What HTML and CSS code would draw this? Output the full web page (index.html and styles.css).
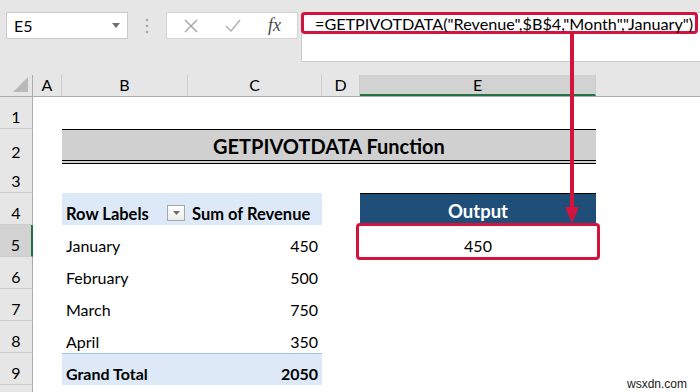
FILE: index.html
```html
<!DOCTYPE html>
<html>
<head>
<meta charset="UTF-8">
<title>GETPIVOTDATA Function</title>
<link rel="stylesheet" href="styles.css">
</head>
<body>
<div class="app">
    <div class="toolbar">
        <div class="namebox">
            <span>E5</span>
            <svg width="8" height="5" viewBox="0 0 8 5"><path d="M0 0h8L4 5z" fill="#6f6f6f"/></svg>
        </div>
        <div class="grip">
            <svg width="4" height="16" viewBox="0 0 4 16"><circle cx="2" cy="2" r="1.3" fill="#a9a9a9"/><circle cx="2" cy="8" r="1.3" fill="#a9a9a9"/><circle cx="2" cy="14" r="1.3" fill="#a9a9a9"/></svg>
        </div>
        <div class="fnbox">
            <svg width="14" height="14" viewBox="0 0 14 14"><path d="M1 1L13 13M13 1L1 13" stroke="#a3a3a3" stroke-width="1.4" fill="none"/></svg>
            <svg width="16" height="13" viewBox="0 0 16 13"><path d="M1 7L6 12L15 1" stroke="#b3b3b3" stroke-width="1.5" fill="none"/></svg>
            <span class="fx">fx</span>
        </div>
        <div class="formula">
            <div class="formula-line">=GETPIVOTDATA("Revenue",$B$4,"Month","January")</div>
        </div>
    </div>

    <div class="colhead">
        <div class="corner"><span class="tri"></span></div>
        <div>A</div>
        <div>B</div>
        <div>C</div>
        <div>D</div>
        <div class="sel">E</div>
        <div class="blank"></div>
    </div>

    <div class="row">
        <div class="rh">1</div>
    </div>
    <div class="row">
        <div class="rh">2</div>
        <div></div>
        <div class="title">GETPIVOTDATA Function</div>
    </div>
    <div class="row">
        <div class="rh">3</div>
    </div>
    <div class="row">
        <div class="rh">4</div>
        <div></div>
        <div class="pv-head">Row Labels<span class="filter"><svg width="7" height="4" viewBox="0 0 7 4"><path d="M0 0h7L3.5 4z" fill="#6d6d6d"/></svg></span></div>
        <div class="pv-head">Sum of Revenue</div>
        <div></div>
        <div class="out-head">Output</div>
    </div>
    <div class="row">
        <div class="rh active">5</div>
        <div></div>
        <div class="cell">January</div>
        <div class="cell num">450</div>
        <div></div>
        <div class="cell mid">450</div>
    </div>
    <div class="row">
        <div class="rh">6</div>
        <div></div>
        <div class="cell">February</div>
        <div class="cell num">500</div>
    </div>
    <div class="row">
        <div class="rh">7</div>
        <div></div>
        <div class="cell">March</div>
        <div class="cell num">750</div>
    </div>
    <div class="row">
        <div class="rh">8</div>
        <div></div>
        <div class="cell">April</div>
        <div class="cell num">350</div>
    </div>
    <div class="row">
        <div class="rh">9</div>
        <div></div>
        <div class="cell total">Grand Total</div>
        <div class="cell num total">2050</div>
    </div>
    <div class="row">
        <div class="rh"></div>
    </div>

    <!-- callouts -->
    <div class="mark-e5"></div>
    <svg class="arrow" width="20" height="195" viewBox="0 0 20 195">
        <path d="M10 0V178" stroke="#d4123e" stroke-width="4"/>
        <path d="M3 174H17L10 190Z" fill="#d4123e"/>
    </svg>
    <div class="watermark">wsxdn.com</div>
</div>
</body>
</html>
```

FILE: styles.css
```css
* {
    box-sizing: border-box;
}

body {
    margin: 0;
    background: #fff;
    font-family: Lato, "Open Sans", sans-serif;
    color: #000;
}

.app {
    position: relative;
    width: 700px;
    height: 392px;
    overflow: hidden;
}

/* formula bar */
.toolbar {
    height: 75px;
    background: #e6e6e6;
    display: flex;
    align-items: flex-start;
    padding: 12px 0 0 6px;
}

.namebox {
    width: 122px;
    height: 27px;
    background: #fff;
    border: 1px solid #cbcbcb;
    display: flex;
    align-items: center;
    justify-content: space-between;
    padding: 0 7px 0 7px;
    font-size: 16px;
}

.grip {
    width: 38px;
    height: 27px;
    display: flex;
    align-items: center;
    justify-content: center;
}

.fnbox {
    width: 132px;
    height: 27px;
    background: #fff;
    border: 1px solid #d3d3d3;
    display: flex;
    align-items: center;
    justify-content: space-between;
    padding: 0 16px 0 17px;
}

.fx {
    font-family: "Liberation Serif", serif;
    font-style: italic;
    font-size: 18px;
    color: #4a4a4a;
}

.formula {
    margin-left: 3px;
    flex: 1;
    height: 50px;
    background: #fff;
    border: 1px solid #cbcbcb;
    border-right: none;
}

.formula-line {
    width: 397px;
    height: 22px;
    margin: -1px 0 0 -1px;
    border: 3px solid #d4123e;
    border-radius: 4px;
    padding-left: 11px;
    font-size: 16.2px;
    line-height: 18px;
    white-space: nowrap;
}

/* sheet */
.colhead,
.row {
    display: grid;
    grid-template-columns: 33px 29px 126px 134px 38px 236px 1fr;
}

.colhead {
    height: 22px;
    background: #e6e6e6;
    border-bottom: 1px solid #ababab;
}

.colhead div {
    display: flex;
    align-items: flex-end;
    justify-content: center;
    padding-bottom: 2px;
    font-size: 16px;
    border-right: 1px solid #cdcdcd;
}

.colhead .corner {
    position: relative;
    border-right: 1px solid #ababab;
}

.tri {
    position: absolute;
    right: 4px;
    bottom: 4px;
    width: 0;
    height: 0;
    border-left: 15px solid transparent;
    border-bottom: 15px solid #b9b9b9;
}

.colhead .sel {
    background: #d2d2d2;
    border-bottom: 2px solid #217346;
    padding-bottom: 0;
}

.colhead .blank {
    border-right: none;
}

.row {
    height: 32px;
}

.rh {
    background: #e6e6e6;
    border-right: 1px solid #ababab;
    border-bottom: 1px solid #cdcdcd;
    display: flex;
    align-items: flex-end;
    justify-content: center;
    padding-bottom: 2px;
    font-size: 16px;
}

.rh.active {
    background: #d2d2d2;
    border-right: 2px solid #217346;
}

.cell {
    display: flex;
    align-items: flex-end;
    padding: 0 4px 2px 4px;
    font-size: 16px;
}

.cell.num {
    justify-content: flex-end;
}

.cell.mid {
    justify-content: center;
}

.cell.total {
    background: #dde9f6;
    border-top: 1px solid #9dc3e6;
    font-weight: bold;
}

.title {
    grid-column: 3 / 7;
    align-self: start;
    height: 35px;
    background: #d0d0d0;
    border-top: 1px solid #000;
    border-bottom: 4px double #000;
    display: flex;
    align-items: flex-end;
    justify-content: center;
    padding-bottom: 2px;
    font-size: 20px;
    font-weight: bold;
}

.pv-head {
    background: #dde9f6;
    display: flex;
    align-items: flex-end;
    padding: 0 4px 1px 4px;
    font-size: 16.5px;
    font-weight: bold;
}

.filter {
    margin-left: auto;
    margin-right: -1px;
    margin-bottom: 3px;
    width: 18px;
    height: 16px;
    border: 1px solid #a7a7a7;
    background: linear-gradient(#fff, #ececec);
    display: flex;
    align-items: center;
    justify-content: center;
}

.out-head {
    background: #1f4e78;
    border-top: 1px solid #000;
    color: #fff;
    font-weight: bold;
    font-size: 18.5px;
    display: flex;
    align-items: flex-end;
    justify-content: center;
    padding-bottom: 3px;
}

/* callouts */
.mark-e5 {
    position: absolute;
    left: 356px;
    top: 223px;
    width: 244px;
    height: 37px;
    border: 3px solid #d4123e;
    border-radius: 4px;
}

.arrow {
    position: absolute;
    left: 562px;
    top: 33px;
}

.watermark {
    position: absolute;
    left: 627px;
    top: 377px;
    font-family: "Liberation Sans", Arial, sans-serif;
    font-size: 12px;
    color: #222;
}
```
